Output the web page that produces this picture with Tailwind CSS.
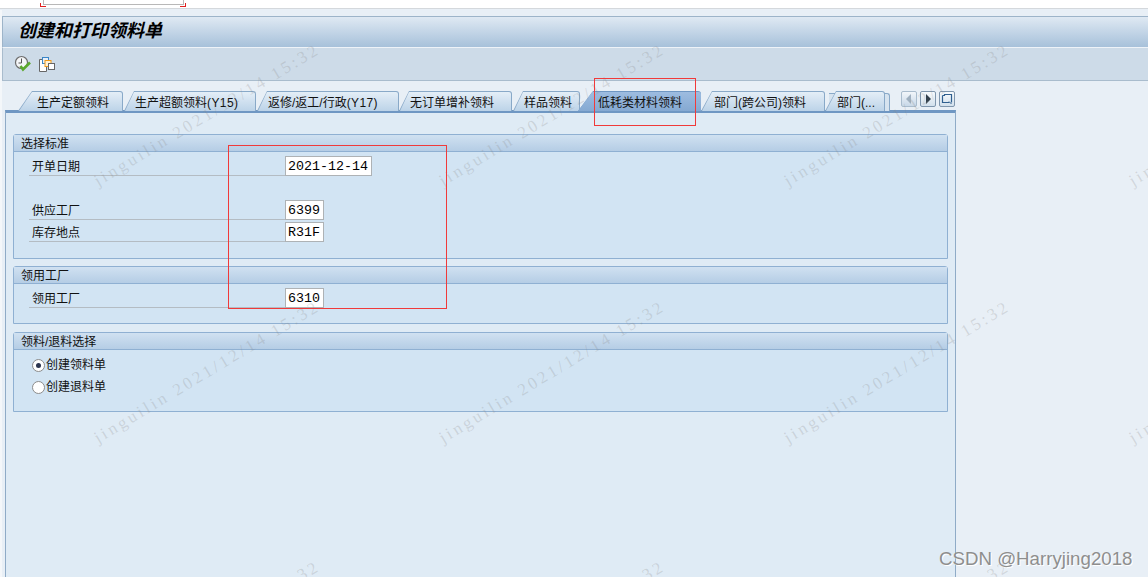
<!DOCTYPE html>
<html lang="zh">
<head>
<meta charset="utf-8">
<script src="https://cdn.jsdelivr.net/npm/@tailwindcss/browser@4"></script>
</head>
<body class="relative w-[1148px] h-[577px] overflow-hidden bg-white font-['Liberation_Sans','Noto_Sans_CJK_SC',sans-serif] text-[12px] text-[#111]">
  <!-- top strip -->
  <div class="relative h-[9px] border-b border-[#d4d8dc] bg-white">
    <div class="absolute left-[43px] top-0 w-[141px] h-[5px] border-x border-b border-[#b8b8b8] bg-white"></div>
    <div class="absolute left-[40px] top-[3px] w-[6px] h-[4px] border-l border-b border-[#e02020]"></div>
    <div class="absolute left-[180px] top-[3px] w-[6px] h-[4px] border-r border-b border-[#e02020]"></div>
  </div>

  <div class="h-[568px] bg-[#e8eff6] pt-[7px] pl-[2px] flex flex-col">
    <!-- title -->
    <div class="h-[31px] bg-gradient-to-b from-[#dfe9f3] to-[#a7c1da] border-t border-l border-[#9db4c9] pl-[15px] pb-[2px] flex items-center font-bold italic text-[18px] leading-none text-black">创建和打印领料单</div>
    <!-- toolbar -->
    <div class="h-[34px] bg-[#cddbe8] border-t border-l border-b border-t-[#eef3f8] border-l-[#a9bccd] border-b-[#a9bccd] pl-[11px] flex items-center gap-[6px]">
      <svg class="w-[18px] h-[18px]" viewBox="0 0 18 18">
        <circle cx="7.5" cy="7.5" r="6" fill="#f4f6f8" stroke="#6d6d6d" stroke-width="1.2"/>
        <path d="M7.5 3.5V8H4.5" fill="none" stroke="#555" stroke-width="1"/>
        <path d="M6.5 11l2.5 3.5L16 7.5" fill="none" stroke="#5aa82e" stroke-width="2.6"/>
      </svg>
      <svg class="w-[17px] h-[17px]" viewBox="0 0 17 17">
        <path d="M1.5 3.5h5v2h2v10h-7z" fill="#fff" stroke="#666"/>
        <rect x="4.5" y="1.5" width="6" height="6" fill="#e8f0f8" stroke="#3a86c8"/>
        <rect x="7" y="4.5" width="6" height="6" fill="#fff3d8" stroke="#f09a18"/>
        <rect x="10.5" y="7.5" width="6" height="6" fill="#fff" stroke="#666"/>
      </svg>
    </div>

    <!-- tab strip -->
    <div class="relative h-[29px] shrink-0">
      <div class="absolute left-[16px] top-[10px] flex items-start">
        <div class="w-[105px] h-[20px] pt-[1px] pl-[1px] pr-[1px] bg-[#89a9c8] rounded-tr-[3px] [clip-path:polygon(14px_0,100%_0,100%_100%,0_100%)]"><div class="h-full bg-gradient-to-b from-[#e4eef7] to-[#bcd3e8] rounded-tr-[2px] pl-[18px] leading-[22px] [clip-path:polygon(13px_0,100%_0,100%_100%,0_100%)]">生产定额领料</div></div>
        <div class="ml-[1px] w-[132px] h-[20px] pt-[1px] pl-[1px] pr-[1px] bg-[#89a9c8] rounded-tr-[3px] [clip-path:polygon(10px_0,100%_0,100%_100%,0_100%)]"><div class="h-full bg-gradient-to-b from-[#e4eef7] to-[#bcd3e8] rounded-tr-[2px] pl-[10px] leading-[22px] whitespace-nowrap [clip-path:polygon(9px_0,100%_0,100%_100%,0_100%)]">生产超额领料<span class="tracking-[0.4px]">(Y15)</span></div></div>
        <div class="ml-[1px] w-[142px] h-[20px] pt-[1px] pl-[1px] pr-[1px] bg-[#89a9c8] rounded-tr-[3px] [clip-path:polygon(10px_0,100%_0,100%_100%,0_100%)]"><div class="h-full bg-gradient-to-b from-[#e4eef7] to-[#bcd3e8] rounded-tr-[2px] pl-[10px] leading-[22px] whitespace-nowrap [clip-path:polygon(9px_0,100%_0,100%_100%,0_100%)]">返修/返工/行政<span class="tracking-[0.4px]">(Y17)</span></div></div>
        <div class="w-[113px] h-[20px] pt-[1px] pl-[1px] pr-[1px] bg-[#89a9c8] rounded-tr-[3px] [clip-path:polygon(10px_0,100%_0,100%_100%,0_100%)]"><div class="h-full bg-gradient-to-b from-[#e4eef7] to-[#bcd3e8] rounded-tr-[2px] pl-[10px] leading-[22px] whitespace-nowrap [clip-path:polygon(9px_0,100%_0,100%_100%,0_100%)]">无订单增补领料</div></div>
        <div class="ml-[1px] w-[67px] h-[20px] pt-[1px] pl-[1px] pr-[1px] bg-[#89a9c8] rounded-tr-[3px] [clip-path:polygon(10px_0,100%_0,100%_100%,0_100%)]"><div class="h-full bg-gradient-to-b from-[#e4eef7] to-[#bcd3e8] rounded-tr-[2px] pl-[10px] leading-[22px] whitespace-nowrap [clip-path:polygon(9px_0,100%_0,100%_100%,0_100%)]">样品领料</div></div>
        <div class="-ml-[2px] w-[123px] h-[20px] pt-[1px] bg-[#6f97c3] rounded-tr-[3px] [clip-path:polygon(15px_0,100%_0,100%_100%,0_100%)]"><div class="h-full bg-gradient-to-b from-[#9dbce0] to-[#85a9d2] rounded-tr-[2px] pl-[20px] leading-[22px] whitespace-nowrap">低耗类材料领料</div></div>
        <div class="w-[124px] h-[20px] pt-[1px] pl-[1px] pr-[1px] bg-[#89a9c8] rounded-tr-[3px] [clip-path:polygon(11px_0,100%_0,100%_100%,0_100%)]"><div class="h-full bg-gradient-to-b from-[#e4eef7] to-[#bcd3e8] rounded-tr-[2px] pl-[12px] leading-[22px] whitespace-nowrap [clip-path:polygon(10px_0,100%_0,100%_100%,0_100%)]">部门(跨公司)领料</div></div>
        <div class="relative w-[65px] h-[20px]">
          <div class="absolute left-[4px] top-[2px] w-[61px] h-[18px] border-t border-r border-[#89a9c8] rounded-tr-[3px] bg-[#d6e3ef]"></div>
          <div class="absolute left-0 top-0 w-[60px] h-[20px] pt-[1px] pl-[1px] pr-[1px] bg-[#89a9c8] rounded-tr-[3px] [clip-path:polygon(11px_0,100%_0,100%_100%,0_100%)]"><div class="h-full bg-gradient-to-b from-[#e4eef7] to-[#bcd3e8] rounded-tr-[2px] pl-[11px] leading-[22px] whitespace-nowrap [clip-path:polygon(10px_0,100%_0,100%_100%,0_100%)]">部门(...</div></div>
        </div>
      </div>
      <!-- scroll buttons -->
      <div class="absolute left-[899px] top-[10px] flex gap-[3px]">
        <div class="w-[16px] h-[16px] border border-[#a9bccd] rounded-[2px] bg-gradient-to-b from-[#f2f6fa] to-[#c8d8e8] flex items-center justify-center">
          <svg class="w-[6px] h-[10px]" viewBox="0 0 6 10"><path d="M5 0v10L0 5z" fill="#9fb0c0"/></svg>
        </div>
        <div class="w-[16px] h-[16px] border border-[#7f96ad] rounded-[2px] bg-gradient-to-b from-[#f7fafc] to-[#d2e0ec] flex items-center justify-center">
          <svg class="w-[6px] h-[10px]" viewBox="0 0 6 10"><path d="M1 0v10l5-5z" fill="#33404c"/></svg>
        </div>
        <div class="w-[16px] h-[16px] border border-[#7f96ad] rounded-[2px] bg-gradient-to-b from-[#f7fafc] to-[#d2e0ec] flex items-center justify-center">
          <svg class="w-[12px] h-[12px]" viewBox="0 0 12 12"><path d="M1.5 2.5h2v-1h7v8M1.5 2.5v7h7" fill="none" stroke="#2f5f8f" stroke-width="1.2"/><path d="M8 8.5l2.5 2.5" stroke="#2f5f8f"/></svg>
        </div>
      </div>
    </div>

    <!-- tab panel -->
    <div class="ml-[3px] w-[951px] flex-1 bg-[#dfebf5] border-x border-[#8fabc7] border-t-[3px] border-t-[#6f97c3] px-[7px] pt-[21px]">
      <!-- group 1 -->
      <section class="h-[125px] rounded-t-[3px] border border-[#8fb0d2] bg-[#d2e4f3]">
        <div class="h-[17px] bg-gradient-to-b from-[#d0e1f1] to-[#b5cde5] border-b border-[#8fb0d2] pl-[7px] leading-[18px]">选择标准</div>
        <div class="pl-[15px] pt-[4px] flex flex-col">
          <div class="flex items-end h-[20px]">
            <div class="w-[256px] h-[20px] border-b border-[#b4bcc3] pl-[3px] leading-[23px]">开单日期</div>
            <div class="w-[87px] h-[20px] border border-[#aeb2b5] bg-white pl-[2px] font-['Liberation_Mono',monospace] text-[13.33px] leading-[19px] text-black">2021-12-14</div>
          </div>
          <div class="flex items-end h-[20px] mt-[24px]">
            <div class="w-[256px] h-[20px] border-b border-[#b4bcc3] pl-[3px] leading-[23px]">供应工厂</div>
            <div class="w-[39px] h-[20px] border border-[#aeb2b5] bg-white pl-[2px] font-['Liberation_Mono',monospace] text-[13.33px] leading-[19px] text-black">6399</div>
          </div>
          <div class="flex items-end h-[20px] mt-[2px]">
            <div class="w-[256px] h-[20px] border-b border-[#b4bcc3] pl-[3px] leading-[23px]">库存地点</div>
            <div class="w-[39px] h-[20px] border border-[#aeb2b5] bg-white pl-[2px] font-['Liberation_Mono',monospace] text-[13.33px] leading-[19px] text-black">R31F</div>
          </div>
        </div>
      </section>
      <!-- group 2 -->
      <section class="mt-[7px] h-[58px] rounded-t-[3px] border border-[#8fb0d2] bg-[#d2e4f3]">
        <div class="h-[17px] bg-gradient-to-b from-[#d0e1f1] to-[#b5cde5] border-b border-[#8fb0d2] pl-[7px] leading-[18px]">领用工厂</div>
        <div class="pl-[15px] pt-[4px]">
          <div class="flex items-end h-[20px]">
            <div class="w-[256px] h-[20px] border-b border-[#b4bcc3] pl-[3px] leading-[23px]">领用工厂</div>
            <div class="w-[39px] h-[20px] border border-[#aeb2b5] bg-white pl-[2px] font-['Liberation_Mono',monospace] text-[13.33px] leading-[19px] text-black">6310</div>
          </div>
        </div>
      </section>
      <!-- group 3 -->
      <section class="mt-[8px] h-[80px] rounded-t-[3px] border border-[#8fb0d2] bg-[#d2e4f3]">
        <div class="h-[17px] bg-gradient-to-b from-[#d0e1f1] to-[#b5cde5] border-b border-[#8fb0d2] pl-[7px] leading-[18px]">领料/退料选择</div>
        <div class="pl-[18px] pt-[7px] flex flex-col gap-[6px]">
          <div class="flex items-center h-[16px]">
            <span class="w-[13px] h-[13px] rounded-full border border-[#8c8c8c] bg-white flex items-center justify-center"><span class="w-[5px] h-[5px] rounded-full bg-[#2b3550]"></span></span>
            <span class="ml-[1px] leading-[18px]">创建领料单</span>
          </div>
          <div class="flex items-center h-[16px]">
            <span class="w-[13px] h-[13px] rounded-full border border-[#8c8c8c] bg-white"></span>
            <span class="ml-[1px] leading-[18px]">创建退料单</span>
          </div>
        </div>
      </section>
    </div>
  </div>

  <!-- left edge -->
  <div class="absolute left-0 top-[10px] w-[2px] h-[567px] bg-[#f4f7fa]"></div>

  <!-- watermarks -->
  <div class="absolute inset-0 pointer-events-none font-['Liberation_Serif',serif] text-[17px] tracking-[3px] text-[#8a8a8a]/25 whitespace-nowrap">
    <span class="absolute left-[207px] top-[115px] -translate-x-1/2 -translate-y-1/2 -rotate-[31deg]">jinguilin 2021/12/14 15:32</span>
    <span class="absolute left-[552px] top-[115px] -translate-x-1/2 -translate-y-1/2 -rotate-[31deg]">jinguilin 2021/12/14 15:32</span>
    <span class="absolute left-[897px] top-[115px] -translate-x-1/2 -translate-y-1/2 -rotate-[31deg]">jinguilin 2021/12/14 15:32</span>
    <span class="absolute left-[1242px] top-[115px] -translate-x-1/2 -translate-y-1/2 -rotate-[31deg]">jinguilin 2021/12/14 15:32</span>
    <span class="absolute left-[207px] top-[372px] -translate-x-1/2 -translate-y-1/2 -rotate-[31deg]">jinguilin 2021/12/14 15:32</span>
    <span class="absolute left-[552px] top-[372px] -translate-x-1/2 -translate-y-1/2 -rotate-[31deg]">jinguilin 2021/12/14 15:32</span>
    <span class="absolute left-[897px] top-[372px] -translate-x-1/2 -translate-y-1/2 -rotate-[31deg]">jinguilin 2021/12/14 15:32</span>
    <span class="absolute left-[1242px] top-[372px] -translate-x-1/2 -translate-y-1/2 -rotate-[31deg]">jinguilin 2021/12/14 15:32</span>
    <span class="absolute left-[207px] top-[632px] -translate-x-1/2 -translate-y-1/2 -rotate-[31deg]">jinguilin 2021/12/14 15:32</span>
    <span class="absolute left-[552px] top-[632px] -translate-x-1/2 -translate-y-1/2 -rotate-[31deg]">jinguilin 2021/12/14 15:32</span>
    <span class="absolute left-[897px] top-[632px] -translate-x-1/2 -translate-y-1/2 -rotate-[31deg]">jinguilin 2021/12/14 15:32</span>
  </div>

  <!-- annotation rectangles -->
  <div class="absolute left-[594px] top-[78px] w-[102px] h-[48px] border border-[#f03a3a]"></div>
  <div class="absolute left-[228px] top-[145px] w-[219px] h-[164px] border border-[#f03a3a]"></div>

  <!-- CSDN mark -->
  <div class="absolute left-[939px] top-[547px] font-['Liberation_Sans',sans-serif] text-[18.7px] leading-[24px] text-[#8e8e8e] [text-shadow:1px_1px_0_#ffffff] whitespace-nowrap">CSDN @Harryjing2018</div>
</body>
</html>
